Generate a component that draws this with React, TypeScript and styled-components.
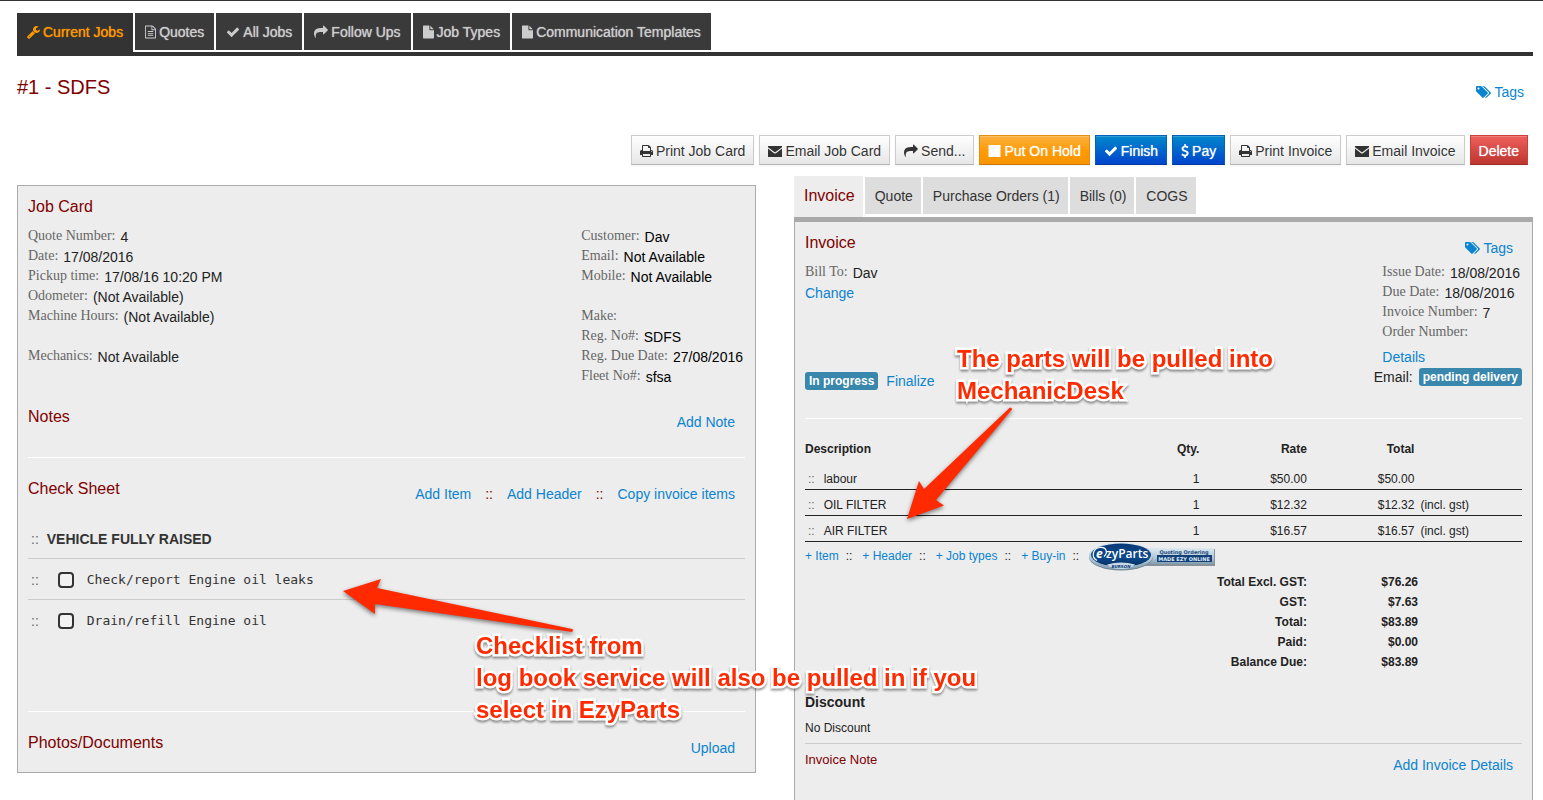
import React from "react";
import styled, { createGlobalStyle, css } from "styled-components";

const sans = '"Liberation Sans", Helvetica, Arial, sans-serif';
const serif = '"Liberation Serif", "Times New Roman", serif';
const mono = '"DejaVu Sans Mono", Monaco, monospace';

const maroon = "#800000";
const link = "#0a84d0";

const GlobalStyle = createGlobalStyle`
  * { box-sizing: border-box; }
  body {
    margin: 0;
    background: #fff;
    color: #222;
    font: 14px/20px ${sans};
  }
`;

/* ---------- icons ---------- */

const icons = {
  wrench: {
    box: "64 0 1664 1792",
    w: 13,
    d: "M448 1472q0-26-19-45t-45-19-45 19-19 45 19 45 45 19 45-19 19-45zm644-420l-682 682q-37 37-90 37-52 0-91-37l-106-108q-38-36-38-90 0-53 38-91l681-681q39 98 114.5 173.5t173.5 114.5zm634-435q0 39-23 106-47 134-164.5 217.5t-258.5 83.5q-185 0-316.5-131.5t-131.5-316.5 131.5-316.5 316.5-131.5q58 0 121.5 16.5t107.5 46.5q16 11 16 28t-16 28l-293 169v224l193 107q5-3 79-48.5t135.5-81 70.5-35.5q15 0 23.5 10t8.5 25z",
  },
  fileText: {
    box: "128 0 1536 1792",
    w: 11,
    d: "M1596 380q28 28 48 76t20 88v1152q0 40-28 68t-68 28h-1344q-40 0-68-28t-28-68v-1600q0-40 28-68t68-28h896q40 0 88 20t76 48zm-444-244v376h376q-10-29-22-41l-313-313q-12-12-41-22zm384 1528v-1024h-416q-40 0-68-28t-28-68v-416h-768v1536h1280zm-1024-864q0-14 9-23t23-9h704q14 0 23 9t9 23v64q0 14-9 23t-23 9h-704q-14 0-23-9t-9-23v-64zm736 224q14 0 23 9t9 23v64q0 14-9 23t-23 9h-704q-14 0-23-9t-9-23v-64q0-14 9-23t23-9h704zm0 256q14 0 23 9t9 23v64q0 14-9 23t-23 9h-704q-14 0-23-9t-9-23v-64q0-14 9-23t23-9h704z",
  },
  check: {
    box: "0 0 1792 1792",
    w: 14,
    d: "M1671 566q0 40-28 68l-724 724-136 136q-28 28-68 28t-68-28l-136-136-362-362q-28-28-28-68t28-68l136-136q28-28 68-28t68 28l294 295 656-657q28-28 68-28t68 28l136 136q28 28 28 68z",
  },
  share: {
    box: "0 0 1792 1792",
    w: 14,
    d: "M1792 640q0 26-19 45l-512 512q-19 19-45 19t-45-19-19-45v-256h-224q-98 0-175.5 6t-154 21.5-133 42.5-105.5 69.5-80 101-48.5 138.5-17.5 181q0 55 5 123 0 6 2.5 23.5t2.5 26.5q0 15-8.5 25t-23.5 10q-16 0-28-17-7-9-13-22t-13.5-30-10.5-24q-127-285-127-451 0-199 53-333 162-403 875-403h224v-256q0-26 19-45t45-19 45 19l512 512q19 19 19 45z",
  },
  file: {
    box: "128 0 1536 1792",
    w: 11,
    d: "M1152 512v-472q22 14 36 28l408 408q14 14 28 36h-472zm-128 32q0 40 28 68t68 28h544v1056q0 40-28 68t-68 28h-1344q-40 0-68-28t-28-68v-1600q0-40 28-68t68-28h800v544z",
  },
  print: {
    box: "64 0 1664 1792",
    w: 13,
    d: "M448 1536h896v-256h-896v256zm0-640h896v-384h-160q-40 0-68-28t-28-68v-160h-640v640zm1152 64q0-26-19-45t-45-19-45 19-19 45 19 45 45 19 45-19 19-45zm128 0v416q0 13-9.5 22.5t-22.5 9.5h-224v160q0 40-28 68t-68 28h-960q-40 0-68-28t-28-68v-160h-224q-13 0-22.5-9.5t-9.5-22.5v-416q0-79 56.5-135.5t135.5-56.5h64v-544q0-40 28-68t68-28h672q40 0 88 20t76 48l152 152q28 28 48 76t20 88v256h64q79 0 135.5 56.5t56.5 135.5z",
  },
  envelope: {
    box: "0 0 14 14",
    w: 14,
    d: "M0 2h14v1.2L7.6 8.1q-.6.4-1.2 0L0 3.2zM0 4.6l6 4.6q1 .7 2 0l6-4.6V13H0z",
  },
  square: { box: "0 0 12 14", w: 13, d: "M0 1h12v12H0z" },
  dollar: {
    box: "384 0 1024 1792",
    w: 8,
    d: "M1362 1185q0 153-99.5 263.5t-258.5 136.5v175q0 14-9 23t-23 9h-135q-13 0-22.5-9.5t-9.5-22.5v-175q-66-9-127.5-31t-101.5-44.5-74-48-46.5-37.5-17.5-18q-17-21-2-41l103-135q7-10 23-12 15-2 24 9l2 2q113 99 243 125 37 8 74 8 81 0 142.5-43t61.5-122q0-28-15-53t-33.5-42-58.5-37.5-66-32-80-32.5q-39-16-61.5-25t-61.5-26.5-62.5-31-56.5-35.5-53.5-42.5-43.5-49-35.5-58-21-66.5-8.5-78q0-138 98-242t255-134v-180q0-13 9.5-22.5t22.5-9.5h135q14 0 23 9t9 23v176q57 6 110.5 23t87 33.5 63.5 37.5 39 29 15 14q17 18 5 38l-81 146q-8 15-23 16-14 3-27-7-3-3-14.5-12t-39-26.5-58.5-32-74.5-26-85.5-11.5q-95 0-155 43t-60 111q0 26 8.5 48t29.5 41.5 39.5 33 56 31 60.5 27 70 27.5q53 20 81 31.5t76 35 75.5 42.5 62 50 53 63.5 31.5 76.5 13 94z",
  },
  tags: {
    box: "0 0 1920 1792",
    w: 15,
    d: "M448 448q0-53-37.5-90.5t-90.5-37.5-90.5 37.5-37.5 90.5 37.5 90.5 90.5 37.5 90.5-37.5 37.5-90.5zm1067 576q0 53-37 90l-491 492q-39 37-91 37-53 0-90-37l-715-716q-38-37-64.5-101t-26.5-117v-416q0-52 38-90t90-38h416q53 0 117 26.5t102 64.5l715 714q37 39 37 91zm384 0q0 53-37 90l-491 492q-39 37-91 37-36 0-59-14t-53-45l470-470q37-37 37-90 0-52-37-91l-715-714q-38-38-102-64.5t-117-26.5h224q53 0 117 26.5t102 64.5l715 714q37 39 37 91z",
  },
};

type IconName = keyof typeof icons;

const IconSvg = styled.svg`
  flex: none;
  height: 14px;
  fill: currentColor;
`;

const Icon = ({ name }: { name: IconName }) => {
  const { box, w, d } = icons[name];
  return (
    <IconSvg viewBox={box} width={w} aria-hidden="true">
      <path d={d} />
    </IconSvg>
  );
};

/* ---------- page frame ---------- */

const Page = styled.div`
  position: relative;
  display: flex;
  flex-direction: column;
  min-height: 100vh;
  padding: 12px 10px 0 17px;
  border-top: 1px solid #333;
`;

const MainNav = styled.nav`
  display: flex;
  align-items: flex-start;
  gap: 2px;
  border-bottom: 4px solid #333;
`;

const MainTab = styled.a<{ $active?: boolean }>`
  display: flex;
  align-items: center;
  gap: 3px;
  height: 37px;
  margin-bottom: 2px;
  padding: 0 10px;
  background: #3a3a3a;
  color: #ccc;
  text-decoration: none;
  text-shadow: 0 0 1px currentColor;
  ${(p) =>
    p.$active &&
    css`
      height: 39px;
      margin-bottom: 0;
      padding-bottom: 2px;
      background: #333;
      color: #ff9900;
    `}
`;

const TitleRow = styled.div`
  display: flex;
  justify-content: space-between;
  padding: 20px 9px 0 0;
`;

const Title = styled.h1`
  margin: 0;
  color: ${maroon};
  font-size: 20px;
  font-weight: 400;
  line-height: 22px;
`;

const Link = styled.a`
  color: ${link};
  text-decoration: none;
`;

const TagsLink = styled(Link)`
  display: flex;
  align-items: center;
  gap: 3px;
  margin-top: 6px;
`;

const Toolbar = styled.div`
  display: flex;
  justify-content: flex-end;
  gap: 5px;
  padding: 33px 5px 0 0;
`;

const tones = {
  plain: css`
    border-color: #ccc #ccc #b3b3b3;
    background: linear-gradient(#fff, #e6e6e6);
    color: #333;
    text-shadow: 0 1px 1px rgba(255, 255, 255, 0.75);
  `,
  warning: css`
    border-color: #e38d13 #e38d13 #c67605;
    background: linear-gradient(#fbb040, #ff9900 60%, #f89406);
    color: #fff;
  `,
  primary: css`
    border-color: #0660b8 #0660b8 #003ca0;
    background: linear-gradient(#0088cc, #0044cc);
    color: #fff;
  `,
  danger: css`
    border-color: #c9403a #c9403a #a02c26;
    background: linear-gradient(#ee5f5b, #bd362f);
    color: #fff;
  `,
};

const Button = styled.button<{ $tone?: keyof typeof tones }>`
  display: flex;
  align-items: center;
  gap: 3px;
  height: 30px;
  padding: 2px 8px 0;
  border: 1px solid;
  border-radius: 0;
  font: 14px/20px ${sans};
  text-shadow: 0 0 1px rgba(255, 255, 255, 0.8);
  box-shadow: inset 0 1px 0 rgba(255, 255, 255, 0.2), 0 1px 2px rgba(0, 0, 0, 0.05);
  ${(p) => tones[p.$tone ?? "plain"]}
`;

const Columns = styled.main`
  flex: 1;
  display: grid;
  grid-template-columns: 1fr 1fr;
  gap: 38px;
  padding-top: 11px;
`;

/* ---------- shared parts ---------- */

const Heading = styled.h2`
  margin: 0;
  color: ${maroon};
  font-size: 16px;
  font-weight: 400;
  line-height: 20px;
`;

const Facts = styled.dl<{ $dark?: boolean }>`
  margin: 0;
  padding-right: 2px;
  color: ${(p) => (p.$dark ? "#000" : "#222")};
`;

const Fact = styled.div<{ $spaced?: boolean }>`
  display: flex;
  gap: 5px;
  height: 20px;
  margin-top: ${(p) => (p.$spaced ? "20px" : "0")};

  dt {
    color: #666;
    font-family: ${serif};
  }

  dd {
    margin: 0;
    padding-top: 1px;
  }
`;

type FactItem = [label: string, value?: string, spaced?: boolean];

const FactList = ({ items, dark }: { items: FactItem[]; dark?: boolean }) => (
  <Facts $dark={dark}>
    {items.map(([label, value, spaced]) => (
      <Fact key={label} $spaced={spaced}>
        <dt>{label}:</dt>
        <dd>{value}</dd>
      </Fact>
    ))}
  </Facts>
);

/* ---------- job card ---------- */

const JobPanel = styled.section`
  align-self: start;
  margin-top: 9px;
  padding: 11px 10px 0;
  border: 1px solid #aaa;
  background: #ededed;
`;

const FactColumns = styled.div`
  display: flex;
  justify-content: space-between;
  padding-top: 9px;
`;

const Section = styled.div<{ $bottom: number; $ruled?: boolean }>`
  display: flex;
  justify-content: space-between;
  align-items: flex-start;
  padding: 21px 10px ${(p) => p.$bottom}px 0;
  border-bottom: ${(p) => (p.$ruled ? "1px solid #fff" : "0")};
`;

const Actions = styled.div`
  display: flex;
  gap: 14px;
  margin-top: 5px;
  color: ${maroon};
`;

const CheckList = styled.ul`
  margin: 0;
  padding: 0 0 71px;
  border-bottom: 1px solid #fff;
  list-style: none;
`;

const CheckRow = styled.li`
  display: flex;
  align-items: center;
  height: 41px;
  padding: 1px 0 0 3px;
  border-bottom: 1px solid #ccc;

  &:last-child {
    height: 40px;
    border-bottom: 0;
  }
`;

const Grip = styled.span`
  color: #666;
`;

const GroupName = styled.strong`
  margin-left: 8px;
  color: #333;
`;

const CheckLabel = styled.label`
  display: flex;
  align-items: center;
  gap: 13px;
  margin-left: 19px;
  color: #333;
  font: 13px/20px ${mono};
`;

const CheckBox = styled.input`
  appearance: none;
  width: 16px;
  height: 16px;
  margin: 0;
  border: 2px solid #333;
  border-radius: 4px;
  background: #f2f2f2;
`;

/* ---------- invoice ---------- */

const InvoiceColumn = styled.div`
  display: flex;
  flex-direction: column;
`;

const InvoiceTabs = styled.nav`
  display: flex;
  align-items: flex-start;
  gap: 2px;
  height: 41px;
`;

const InvoiceTab = styled.a<{ $active?: boolean }>`
  margin-top: 1px;
  padding: 9px 8px 8px 10px;
  background: #ddd;
  color: #333;
  text-decoration: none;
  ${(p) =>
    p.$active &&
    css`
      height: 41px;
      margin-top: 0;
      padding: 10px 8px 10px 10px;
      background: #ededed;
      color: ${maroon};
      font-size: 16px;
    `}
`;

const InvoicePanel = styled.section`
  flex: 1;
  padding: 11px 10px 0;
  border: solid #aaa;
  border-width: 5px 1px 0;
  background: #ededed;
`;

const InvoiceTop = styled.div`
  display: flex;
  justify-content: space-between;
  padding-bottom: 27px;
  border-bottom: 1px solid #fff;
`;

const BillTo = styled.div`
  display: flex;
  flex-direction: column;
  align-items: flex-start;

  ${Facts} {
    margin: 9px 0 1px;
  }
`;

const Status = styled.div`
  display: flex;
  align-items: center;
  gap: 8px;
  margin-top: auto;
`;

const Badge = styled.span`
  padding: 2px 4px;
  border-radius: 3px;
  background: #3a87ad;
  color: #fff;
  font-size: 12px;
  font-weight: 700;
  line-height: 14px;
`;

const InvoiceMeta = styled.div`
  display: flex;
  flex-direction: column;
  align-items: flex-end;
  padding-bottom: 4px;

  ${TagsLink} {
    margin: 5px 9px 4px 0;
  }
`;

const Details = styled.div`
  padding-top: 5px;
`;

const Delivery = styled.div`
  display: flex;
  align-items: center;
  gap: 6px;
`;

const Lines = styled.table`
  width: 100%;
  border-collapse: collapse;
  table-layout: fixed;
  font-size: 12px;

  th {
    padding: 20px 0 5px;
  }

  td {
    padding: 5px 0 0;
    border-bottom: 1px solid #222;
  }
`;

const Col = styled.col<{ $share: number }>`
  width: ${(p) => p.$share}%;
`;

const HeadCell = styled.th<{ $right?: boolean }>`
  text-align: ${(p) => (p.$right ? "right" : "left")};
`;

const Cell = styled.td<{ $right?: boolean }>`
  text-align: ${(p) => (p.$right ? "right" : "left")};

  ${Grip} {
    margin: 0 9px 0 3px;
  }
`;

const TaxNote = styled.span`
  padding-left: 6px;
`;

const AddLinks = styled.div`
  display: flex;
  align-items: center;
  height: 28px;
  margin-bottom: 2px;
  font-size: 12px;
`;

const Divider = styled.span`
  margin: 0 10px 0 7px;
`;

const LogoButton = styled.a`
  display: flex;
`;

const Totals = styled.table`
  width: 100%;
  border-collapse: collapse;
  table-layout: fixed;
  font-size: 12px;
  font-weight: 700;

  th,
  td {
    padding: 0;
    text-align: right;
  }

  td {
    padding-right: 104px;
  }
`;

const DiscountTitle = styled.h3`
  margin: 20px 0 0;
  font-size: 14px;
  line-height: 20px;
`;

const DiscountText = styled.p`
  margin: 0;
  padding: 6px 0 5px;
  border-bottom: 1px solid #ccc;
  font-size: 12px;
`;

const NoteRow = styled.div`
  display: flex;
  justify-content: space-between;
  align-items: flex-start;
  padding: 6px 9px 0 0;

  ${Link} {
    margin-top: 5px;
  }
`;

const NoteTitle = styled(Heading)`
  font-size: 13px;
`;

/* ---------- annotations drawn over the page ---------- */

const Callout = styled.p<{ $x: number; $y: number }>`
  position: absolute;
  left: ${(p) => p.$x}px;
  top: ${(p) => p.$y}px;
  margin: 0;
  color: #ff2a00;
  font-size: 24px;
  font-weight: 700;
  line-height: 32px;
  white-space: nowrap;
  -webkit-text-stroke: 5px #fff;
  paint-order: stroke fill;
  filter: drop-shadow(0 2px 1px rgba(0, 0, 0, 0.4));
  pointer-events: none;
`;

const Arrow = styled.svg<{ $x: number; $y: number }>`
  position: absolute;
  left: ${(p) => p.$x}px;
  top: ${(p) => p.$y}px;
  overflow: visible;
  fill: #ff2a00;
  filter: drop-shadow(0 2px 2px rgba(0, 0, 0, 0.5));
  pointer-events: none;
`;

const EzyPartsLogo = () => (
  <svg width="127" height="29" viewBox="0 0 127 29" role="img" aria-label="EzyParts">
    <defs>
      <linearGradient id="silver" x1="0" y1="0" x2="0" y2="1">
        <stop offset="0" stopColor="#dde9f1" />
        <stop offset="0.6" stopColor="#b3c9d8" />
        <stop offset="1" stopColor="#7f9cb0" />
      </linearGradient>
      <linearGradient id="navy" x1="0" y1="0" x2="0" y2="1">
        <stop offset="0" stopColor="#0a3a78" />
        <stop offset="0.6" stopColor="#0d4a8c" />
        <stop offset="1" stopColor="#062d63" />
      </linearGradient>
    </defs>
    <rect x="56" y="7" width="70" height="17" fill="#8a9299" />
    <rect x="56" y="6" width="69" height="16" fill="url(#silver)" />
    <rect x="68" y="13" width="55" height="7" fill="#123f78" />
    <text x="95" y="12" textAnchor="middle" fontFamily="DejaVu Sans" fontWeight="700" fontSize="5" fill="#1c4a80">
      Quoting  Ordering
    </text>
    <text x="95" y="19" textAnchor="middle" fontFamily="DejaVu Sans" fontWeight="700" fontSize="5" fill="#dfeaf3">
      MADE EZY ONLINE
    </text>
    <ellipse cx="32" cy="15" rx="32" ry="13.5" fill="#6f8797" />
    <ellipse cx="32" cy="14" rx="32" ry="13.5" fill="url(#silver)" />
    <ellipse cx="32" cy="13" rx="30" ry="11.5" fill="url(#navy)" />
    <path d="M18 22.500q14-4 28 0-4 4.500-14 4.500t-14-4.500z" fill="#c7d9e5" />
    <text x="32" y="26" textAnchor="middle" fontFamily="DejaVu Sans" fontWeight="700" fontStyle="italic" fontSize="4" fill="#0c3a74">
      BURSON
    </text>
    <text x="7" y="16" fontFamily="Open Sans" fontWeight="700" fontStyle="italic" fontSize="12" fill="#fff">
      e
    </text>
    <path d="M8 18.500C1.500 15 4 6 11 5.500s8 5.500 4 9" fill="none" stroke="#fff" strokeWidth="1.200" />
    <text x="17" y="16" fontFamily="Open Sans" fontWeight="600" fontSize="12" fill="#fff">
      zyParts
    </text>
  </svg>
);

/* ---------- data ---------- */

const mainTabs: [IconName, string][] = [
  ["wrench", "Current Jobs"],
  ["fileText", "Quotes"],
  ["check", "All Jobs"],
  ["share", "Follow Ups"],
  ["file", "Job Types"],
  ["file", "Communication Templates"],
];

const toolbar: { icon?: IconName; text: string; tone?: keyof typeof tones }[] = [
  { icon: "print", text: "Print Job Card" },
  { icon: "envelope", text: "Email Job Card" },
  { icon: "share", text: "Send..." },
  { icon: "square", text: "Put On Hold", tone: "warning" },
  { icon: "check", text: "Finish", tone: "primary" },
  { icon: "dollar", text: "Pay", tone: "primary" },
  { icon: "print", text: "Print Invoice" },
  { icon: "envelope", text: "Email Invoice" },
  { text: "Delete", tone: "danger" },
];

const jobFacts: FactItem[] = [
  ["Quote Number", "4"],
  ["Date", "17/08/2016"],
  ["Pickup time", "17/08/16 10:20 PM"],
  ["Odometer", "(Not Available)"],
  ["Machine Hours", "(Not Available)"],
  ["Mechanics", "Not Available", true],
];

const customerFacts: FactItem[] = [
  ["Customer", "Dav"],
  ["Email", "Not Available"],
  ["Mobile", "Not Available"],
  ["Make", "", true],
  ["Reg. No#", "SDFS"],
  ["Reg. Due Date", "27/08/2016"],
  ["Fleet No#", "sfsa"],
];

const invoiceFacts: FactItem[] = [
  ["Issue Date", "18/08/2016"],
  ["Due Date", "18/08/2016"],
  ["Invoice Number", "7"],
  ["Order Number"],
];

const checks = ["Check/report Engine oil leaks", "Drain/refill Engine oil"];

const invoiceTabs = ["Invoice", "Quote", "Purchase Orders (1)", "Bills (0)", "COGS"];

const lines = [
  { name: "labour", rate: "$50.00", total: "$50.00", note: "" },
  { name: "OIL FILTER", rate: "$12.32", total: "$12.32", note: "(incl. gst)" },
  { name: "AIR FILTER", rate: "$16.57", total: "$16.57", note: "(incl. gst)" },
];

const totals = [
  ["Total Excl. GST:", "$76.26"],
  ["GST:", "$7.63"],
  ["Total:", "$83.89"],
  ["Paid:", "$0.00"],
  ["Balance Due:", "$83.89"],
];

const JobCard = () => (
  <JobPanel>
    <Heading>Job Card</Heading>
    <FactColumns>
      <FactList items={jobFacts} />
      <FactList items={customerFacts} dark />
    </FactColumns>
    <Section $bottom={25} $ruled>
      <Heading>Notes</Heading>
      <Actions>
        <Link href="#add-note">Add Note</Link>
      </Actions>
    </Section>
    <Section $bottom={14}>
      <Heading>Check Sheet</Heading>
      <Actions>
        <Link href="#add-item">Add Item</Link>
        <span>::</span>
        <Link href="#add-header">Add Header</Link>
        <span>::</span>
        <Link href="#copy-items">Copy invoice items</Link>
      </Actions>
    </Section>
    <CheckList>
      <CheckRow>
        <Grip>::</Grip>
        <GroupName>VEHICLE FULLY RAISED</GroupName>
      </CheckRow>
      {checks.map((text) => (
        <CheckRow key={text}>
          <Grip>::</Grip>
          <CheckLabel>
            <CheckBox type="checkbox" />
            {text}
          </CheckLabel>
        </CheckRow>
      ))}
    </CheckList>
    <Section $bottom={14}>
      <Heading>Photos/Documents</Heading>
      <Actions>
        <Link href="#upload">Upload</Link>
      </Actions>
    </Section>
  </JobPanel>
);

const Invoice = () => (
  <InvoiceColumn>
    <InvoiceTabs>
      {invoiceTabs.map((text, i) => (
        <InvoiceTab key={text} href="#tab" $active={i === 0}>
          {text}
        </InvoiceTab>
      ))}
    </InvoiceTabs>
    <InvoicePanel>
      <InvoiceTop>
        <BillTo>
          <Heading>Invoice</Heading>
          <FactList items={[["Bill To", "Dav"]]} />
          <Link href="#change">Change</Link>
          <Status>
            <Badge>In progress</Badge>
            <Link href="#finalize">Finalize</Link>
          </Status>
        </BillTo>
        <InvoiceMeta>
          <TagsLink href="#invoice-tags">
            <Icon name="tags" />
            Tags
          </TagsLink>
          <div>
            <FactList items={invoiceFacts} />
            <Details>
              <Link href="#details">Details</Link>
            </Details>
          </div>
          <Delivery>
            Email: <Badge>pending delivery</Badge>
          </Delivery>
        </InvoiceMeta>
      </InvoiceTop>

      <Lines>
        <colgroup>
          <Col $share={40} />
          <Col $share={15} />
          <Col $share={15} />
          <Col $share={15} />
          <Col $share={15} />
        </colgroup>
        <thead>
          <tr>
            <HeadCell>Description</HeadCell>
            <HeadCell $right>Qty.</HeadCell>
            <HeadCell $right>Rate</HeadCell>
            <HeadCell $right>Total</HeadCell>
            <HeadCell />
          </tr>
        </thead>
        <tbody>
          {lines.map((line) => (
            <tr key={line.name}>
              <Cell>
                <Grip>::</Grip>
                {line.name}
              </Cell>
              <Cell $right>1</Cell>
              <Cell $right>{line.rate}</Cell>
              <Cell $right>{line.total}</Cell>
              <Cell>
                <TaxNote>{line.note}</TaxNote>
              </Cell>
            </tr>
          ))}
        </tbody>
      </Lines>

      <AddLinks>
        {["+ Item", "+ Header", "+ Job types", "+ Buy-in"].map((text) => (
          <React.Fragment key={text}>
            <Link href="#add">{text}</Link>
            <Divider>::</Divider>
          </React.Fragment>
        ))}
        <LogoButton href="#ezyparts">
          <EzyPartsLogo />
        </LogoButton>
      </AddLinks>

      <Totals>
        <colgroup>
          <Col $share={70} />
          <Col $share={30} />
        </colgroup>
        <tbody>
          {totals.map(([label, value]) => (
            <tr key={label}>
              <th scope="row">{label}</th>
              <td>{value}</td>
            </tr>
          ))}
        </tbody>
      </Totals>

      <DiscountTitle>Discount</DiscountTitle>
      <DiscountText>No Discount</DiscountText>
      <NoteRow>
        <NoteTitle>Invoice Note</NoteTitle>
        <Link href="#invoice-details">Add Invoice Details</Link>
      </NoteRow>
    </InvoicePanel>
  </InvoiceColumn>
);

export default function App() {
  return (
    <Page>
      <GlobalStyle />
      <MainNav>
        {mainTabs.map(([icon, text], i) => (
          <MainTab key={text} href="#jobs" $active={i === 0}>
            <Icon name={icon} />
            {text}
          </MainTab>
        ))}
      </MainNav>
      <TitleRow>
        <Title>#1 - SDFS</Title>
        <TagsLink href="#tags">
          <Icon name="tags" />
          Tags
        </TagsLink>
      </TitleRow>
      <Toolbar>
        {toolbar.map(({ icon, text, tone }) => (
          <Button key={text} type="button" $tone={tone}>
            {icon && <Icon name={icon} />}
            {text}
          </Button>
        ))}
      </Toolbar>
      <Columns>
        <JobCard />
        <Invoice />
      </Columns>

      <Arrow $x={907} $y={405} width="105" height="113" viewBox="0 0 105 113">
        <path d="M103 1.500q2 0 2 2L29 94l8 5.500L0 113l12-38 5 8z" />
      </Arrow>
      <Callout $x={957} $y={342}>
        The parts will be pulled into
        <br />
        MechanicDesk
      </Callout>
      <Arrow $x={343} $y={577} width="230" height="54" viewBox="0 0 230 54">
        <path d="M0 13L38 1l-4 9 195 41q2 1 0 3L32 26v10z" />
      </Arrow>
      <Callout $x={476} $y={629}>
        Checklist from
        <br />
        log book service will also be pulled in if you
        <br />
        select in EzyParts
      </Callout>
    </Page>
  );
}
